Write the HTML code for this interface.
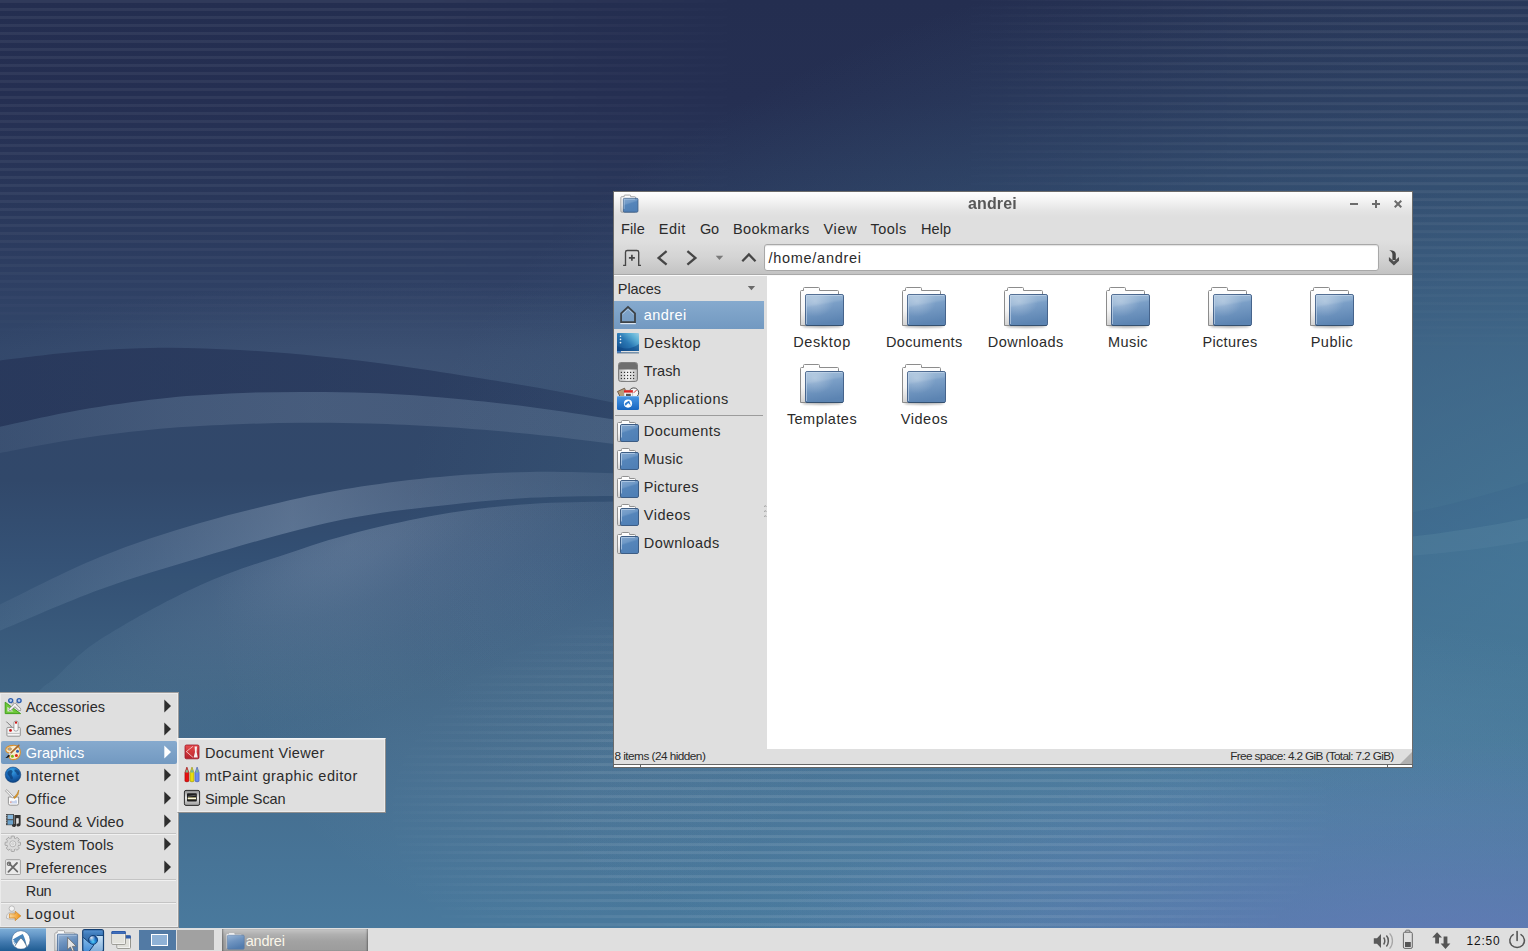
<!DOCTYPE html>
<html lang="en">
<head>
<meta charset="utf-8">
<title>andrei - Lubuntu desktop</title>
<style>
*{box-sizing:border-box;margin:0;padding:0}
html,body{width:1528px;height:951px;overflow:hidden;background:#2c3b60}
body{position:relative;font-family:"Liberation Sans","DejaVu Sans",sans-serif;color:#2e2e2e;font-size:14px;line-height:1}
.abs{position:absolute}
#wall{position:absolute;left:0;top:0;width:1528px;height:951px}
.t{position:absolute;white-space:nowrap;transform-origin:0 50%;line-height:20px;height:20px}
/* window */
#win{position:absolute;left:613px;top:191px;width:800px;height:577px;background:#dfdfdf;border:1px solid #6c6c6c}
#titlebar{position:absolute;left:0;top:0;width:798px;height:25px;background:linear-gradient(#ffffff 0px,#f4f4f4 8px,#e4e4e4 19px,#dfdfdf 25px)}
#toolbar{position:absolute;left:0;top:48px;width:798px;height:35px;background:linear-gradient(#dfdfdf,#d4d4d4 50%,#c3c3c3 100%);border-bottom:1px solid #a9a9a9}
#tbline{position:absolute;left:0;top:83px;width:798px;height:1px;background:#fbfbfb}
#addr{position:absolute;left:150px;top:52px;width:615px;height:27px;background:#fff;border:1px solid #a8a8a8;border-radius:3px;box-shadow:inset 0 1px 1px rgba(0,0,0,.12)}
#side{position:absolute;left:0;top:84px;width:150px;height:473px;background:#dfdfdf}
#pane{position:absolute;left:153px;top:84px;width:645px;height:473px;background:#fff}
#status{position:absolute;left:0;top:557px;width:798px;height:15px;background:#dfdfdf}
#wbot{position:absolute;left:-1px;top:572px;width:800px;height:4px;background:#fff;border:1px solid #666}
.sel{position:absolute;left:0;width:150px;height:28px;background:linear-gradient(#86aace,#7299c1)}
/* panel */
#panel{position:absolute;left:0;top:928px;width:1528px;height:23px;background:#dfdfdf}
/* menus */
.menu{position:absolute;background:#dfdfdf;border:1px solid #9c9c9c;box-shadow:inset 0 0 0 1px #ebebeb}
.msel{position:absolute;background:linear-gradient(#86aace,#7299c1);border-radius:2px}
.sep{position:absolute;height:1px;background:#c4c4c4;border-bottom:1px solid #f1f1f1;box-sizing:content-box}
</style>
</head>
<body>
<!--WALL_START-->
<svg id="wall" width="1528" height="951" viewBox="0 0 1528 951">
<defs>
<linearGradient id="gbase" x1="0" y1="0" x2="0" y2="951" gradientUnits="userSpaceOnUse">
<stop offset="0" stop-color="#242e50"/>
<stop offset="0.105" stop-color="#252f52"/>
<stop offset="0.21" stop-color="#29375a"/>
<stop offset="0.295" stop-color="#2e3f63"/>
<stop offset="0.368" stop-color="#32476a"/>
<stop offset="0.505" stop-color="#31486a"/>
<stop offset="0.59" stop-color="#355276"/>
<stop offset="0.72" stop-color="#3f6484"/>
<stop offset="0.84" stop-color="#456f91"/>
<stop offset="1" stop-color="#4a7b9f"/>
</linearGradient>
<radialGradient id="gright" cx="0" cy="0" r="1" gradientUnits="userSpaceOnUse" gradientTransform="translate(1650 540) scale(1250 640)">
<stop offset="0" stop-color="#4d88a8" stop-opacity="0.72"/>
<stop offset="0.5" stop-color="#4d88a8" stop-opacity="0.36"/>
<stop offset="1" stop-color="#4d88a8" stop-opacity="0"/>
</radialGradient>
<radialGradient id="gpurple" cx="0" cy="0" r="1" gradientUnits="userSpaceOnUse" gradientTransform="translate(1480 1010) scale(760 270)">
<stop offset="0" stop-color="#657ab9" stop-opacity="1"/>
<stop offset="0.3" stop-color="#627ab6" stop-opacity="0.85"/>
<stop offset="0.6" stop-color="#607ab4" stop-opacity="0.45"/>
<stop offset="1" stop-color="#5f7ab4" stop-opacity="0"/>
</radialGradient>
<radialGradient id="glow2" cx="0" cy="0" r="1" gradientUnits="userSpaceOnUse" gradientTransform="translate(1180 800) scale(640 190)">
<stop offset="0" stop-color="#7ea8d2" stop-opacity="0.14"/>
<stop offset="0.6" stop-color="#7ea8d2" stop-opacity="0.08"/>
<stop offset="1" stop-color="#7ea8d2" stop-opacity="0"/>
</radialGradient>
<radialGradient id="gglow3" cx="540" cy="600" r="330" gradientUnits="userSpaceOnUse">
<stop offset="0" stop-color="#bccde1" stop-opacity="0.08"/>
<stop offset="0.6" stop-color="#bccde1" stop-opacity="0.05"/>
<stop offset="1" stop-color="#bccde1" stop-opacity="0"/>
</radialGradient>
<radialGradient id="gglow" cx="0" cy="0" r="1" gradientUnits="userSpaceOnUse" gradientTransform="translate(350 545) rotate(-24) scale(430 170)">
<stop offset="0" stop-color="#bccde1" stop-opacity="0.225"/>
<stop offset="0.12" stop-color="#bccde1" stop-opacity="0.2"/>
<stop offset="0.35" stop-color="#bccde1" stop-opacity="0.115"/>
<stop offset="0.6" stop-color="#bccde1" stop-opacity="0.055"/>
<stop offset="0.85" stop-color="#bccde1" stop-opacity="0.012"/>
<stop offset="1" stop-color="#bccde1" stop-opacity="0"/>
</radialGradient>
<radialGradient id="gup" cx="0" cy="0" r="1" gradientUnits="userSpaceOnUse" gradientTransform="translate(400 375) scale(460 95)">
<stop offset="0" stop-color="#bccde1" stop-opacity="0.085"/>
<stop offset="0.55" stop-color="#bccde1" stop-opacity="0.045"/>
<stop offset="1" stop-color="#bccde1" stop-opacity="0"/>
</radialGradient>
<linearGradient id="gb1" x1="0" y1="0" x2="680" y2="0" gradientUnits="userSpaceOnUse">
<stop offset="0" stop-color="#bccde1" stop-opacity="0.065"/>
<stop offset="0.25" stop-color="#bccde1" stop-opacity="0.13"/>
<stop offset="0.46" stop-color="#bccde1" stop-opacity="0.155"/>
<stop offset="0.9" stop-color="#bccde1" stop-opacity="0.13"/>
<stop offset="1" stop-color="#bccde1" stop-opacity="0.1"/>
</linearGradient>
<linearGradient id="gb2" x1="0" y1="0" x2="680" y2="0" gradientUnits="userSpaceOnUse">
<stop offset="0" stop-color="#bccde1" stop-opacity="0.06"/>
<stop offset="0.22" stop-color="#bccde1" stop-opacity="0.16"/>
<stop offset="0.43" stop-color="#bccde1" stop-opacity="0.29"/>
<stop offset="0.545" stop-color="#bccde1" stop-opacity="0.24"/>
<stop offset="0.66" stop-color="#bccde1" stop-opacity="0.19"/>
<stop offset="0.78" stop-color="#bccde1" stop-opacity="0.15"/>
<stop offset="0.9" stop-color="#bccde1" stop-opacity="0.11"/>
<stop offset="1" stop-color="#bccde1" stop-opacity="0.08"/>
</linearGradient>
<linearGradient id="gd1" x1="0" y1="0" x2="680" y2="0" gradientUnits="userSpaceOnUse">
<stop offset="0" stop-color="#14183c" stop-opacity="0.3"/>
<stop offset="0.45" stop-color="#14183c" stop-opacity="0.23"/>
<stop offset="0.9" stop-color="#14183c" stop-opacity="0.15"/>
<stop offset="1" stop-color="#14183c" stop-opacity="0.1"/>
</linearGradient>
<pattern id="stripes" width="8" height="8" patternUnits="userSpaceOnUse">
<rect x="0" y="0" width="8" height="2.9" fill="#ffffff"/>
</pattern>
<pattern id="stripes2" width="8" height="8" patternUnits="userSpaceOnUse">
<rect x="0" y="6.2" width="8" height="1.8" fill="#ffffff"/><rect x="0" y="0" width="8" height="1.2" fill="#ffffff"/>
</pattern>
<pattern id="stripes3" width="8" height="8" patternUnits="userSpaceOnUse">
<rect x="0" y="3.1" width="8" height="3" fill="#ffffff"/>
</pattern>
<linearGradient id="fadeTL" x1="0" y1="0" x2="1" y2="0">
<stop offset="0" stop-color="#fff" stop-opacity="1"/>
<stop offset="0.55" stop-color="#fff" stop-opacity="1"/>
<stop offset="1" stop-color="#fff" stop-opacity="0"/>
</linearGradient>
<linearGradient id="fadeTLv" x1="0" y1="0" x2="0" y2="1">
<stop offset="0" stop-color="#fff" stop-opacity="1"/>
<stop offset="0.6" stop-color="#fff" stop-opacity="0.9"/>
<stop offset="1" stop-color="#fff" stop-opacity="0"/>
</linearGradient>
<mask id="mTL"><rect x="0" y="0" width="770" height="352" fill="url(#fadeTL)"/></mask>
<mask id="mTLv"><rect x="0" y="0" width="770" height="352" fill="url(#fadeTLv)"/></mask>
<linearGradient id="fadeTR" x1="0" y1="0" x2="1" y2="0">
<stop offset="0" stop-color="#fff" stop-opacity="0"/>
<stop offset="0.2" stop-color="#fff" stop-opacity="0.1"/>
<stop offset="0.4" stop-color="#fff" stop-opacity="0.5"/>
<stop offset="0.6" stop-color="#fff" stop-opacity="0.85"/>
<stop offset="1" stop-color="#fff" stop-opacity="1"/>
</linearGradient>
<linearGradient id="fadeTRv" x1="0" y1="0" x2="0" y2="1">
<stop offset="0" stop-color="#fff" stop-opacity="1"/>
<stop offset="0.5" stop-color="#fff" stop-opacity="0.9"/>
<stop offset="1" stop-color="#fff" stop-opacity="0"/>
</linearGradient>
<mask id="mTR"><rect x="830" y="0" width="698" height="368" fill="url(#fadeTR)"/></mask>
<mask id="mTRv"><rect x="830" y="0" width="698" height="368" fill="url(#fadeTRv)"/></mask>
<radialGradient id="fadeB" cx="0" cy="0" r="1" gradientUnits="userSpaceOnUse" gradientTransform="translate(860 812) scale(480 240)">
<stop offset="0" stop-color="#fff" stop-opacity="1"/>
<stop offset="0.6" stop-color="#fff" stop-opacity="0.8"/>
<stop offset="1" stop-color="#fff" stop-opacity="0"/>
</radialGradient>
<mask id="mB"><rect x="380" y="570" width="960" height="360" fill="url(#fadeB)"/></mask>
</defs>
<rect width="1528" height="951" fill="url(#gbase)"/>
<rect width="1528" height="951" fill="url(#gright)"/>
<rect width="1528" height="951" fill="url(#glow2)"/>
<rect width="1528" height="951" fill="url(#gpurple)"/>
<path d="M-20.0 363.5 C-13.3 362.5 -16.7 362.5 0.0 360.5 C16.7 358.5 53.3 353.6 80.0 351.5 C106.7 349.4 133.3 347.9 160.0 347.7 C186.7 347.4 213.2 348.5 240.0 350.0 C266.8 351.5 294.3 353.8 321.0 356.5 C347.7 359.2 373.2 362.3 400.0 366.0 C426.8 369.7 457.0 374.6 482.0 378.6 C507.0 382.6 528.0 386.0 550.0 390.0 C572.0 394.0 592.3 398.2 614.0 402.7 C635.7 407.2 658.0 412.2 680.0 417.0 L680 200 L-20 200 Z" fill="url(#gup)"/>
<path d="M-20.0 363.5 C-13.3 362.5 -16.7 362.5 0.0 360.5 C16.7 358.5 53.3 353.6 80.0 351.5 C106.7 349.4 133.3 347.9 160.0 347.7 C186.7 347.4 213.2 348.5 240.0 350.0 C266.8 351.5 294.3 353.8 321.0 356.5 C347.7 359.2 373.2 362.3 400.0 366.0 C426.8 369.7 457.0 374.6 482.0 378.6 C507.0 382.6 528.0 386.0 550.0 390.0 C572.0 394.0 592.3 398.2 614.0 402.7 C635.7 407.2 658.0 412.2 680.0 417.0 L680.0 431.0 C658.0 427.2 639.0 423.6 614.0 419.6 C589.0 415.6 558.7 410.7 530.0 407.0 C501.3 403.3 468.7 399.8 442.0 397.5 C415.3 395.2 393.5 393.9 370.0 393.0 C346.5 392.1 324.3 391.8 301.0 391.9 C277.7 392.0 253.5 392.4 230.0 393.5 C206.5 394.6 185.0 395.9 160.0 398.7 C135.0 401.4 106.7 405.3 80.0 410.0 C53.3 414.7 16.7 423.2 0.0 426.8 C-16.7 430.4 -13.3 429.9 -20.0 431.5 Z" fill="url(#gd1)"/>
<path d="M-20.0 431.5 C-13.3 429.9 -16.7 430.4 0.0 426.8 C16.7 423.2 53.3 414.7 80.0 410.0 C106.7 405.3 135.0 401.4 160.0 398.7 C185.0 395.9 206.5 394.6 230.0 393.5 C253.5 392.4 277.7 392.0 301.0 391.9 C324.3 391.8 346.5 392.1 370.0 393.0 C393.5 393.9 415.3 395.2 442.0 397.5 C468.7 399.8 501.3 403.3 530.0 407.0 C558.7 410.7 589.0 415.6 614.0 419.6 C639.0 423.6 658.0 427.2 680.0 431.0 L680.0 453.0 C658.0 450.0 639.0 447.2 614.0 444.0 C589.0 440.8 558.7 436.9 530.0 434.0 C501.3 431.1 468.7 428.6 442.0 426.8 C415.3 425.1 393.5 424.2 370.0 423.5 C346.5 422.8 324.3 422.6 301.0 422.8 C277.7 423.0 253.5 423.5 230.0 424.5 C206.5 425.5 185.0 426.5 160.0 428.8 C135.0 431.1 106.7 434.5 80.0 438.5 C53.3 442.5 16.7 449.9 0.0 453.0 C-16.7 456.1 -13.3 455.7 -20.0 457.0 Z" fill="url(#gb1)"/>
<path d="M-20.0 615.0 C-13.3 611.5 -20.0 614.3 0.0 604.6 C20.0 594.9 66.7 570.6 100.0 557.0 C133.3 543.4 166.7 532.8 200.0 523.0 C233.3 513.2 271.7 504.3 300.0 498.0 C328.3 491.7 345.0 488.9 370.0 485.2 C395.0 481.5 423.3 478.1 450.0 475.9 C476.7 473.7 502.8 472.3 530.0 471.9 C557.2 471.4 588.0 472.5 613.0 473.2 C638.0 473.9 657.7 475.1 680.0 476.0 L680.0 496.5 C657.7 496.3 638.0 495.7 613.0 495.9 C588.0 496.1 557.2 496.3 530.0 497.8 C502.8 499.3 476.7 501.9 450.0 504.7 C423.3 507.5 395.0 510.6 370.0 514.7 C345.0 518.8 328.3 522.2 300.0 529.4 C271.7 536.6 233.3 547.8 200.0 557.8 C166.7 567.8 133.3 577.2 100.0 589.4 C66.7 601.5 20.0 622.3 0.0 630.7 C-20.0 639.1 -13.3 636.9 -20.0 640.0 Z" fill="url(#gb2)"/>
<path d="M-20.0 640.0 C-13.3 636.9 -20.0 639.1 0.0 630.7 C20.0 622.3 66.7 601.5 100.0 589.4 C133.3 577.2 166.7 567.8 200.0 557.8 C233.3 547.8 271.7 536.6 300.0 529.4 C328.3 522.2 345.0 518.8 370.0 514.7 C395.0 510.6 423.3 507.5 450.0 504.7 C476.7 501.9 502.8 499.3 530.0 497.8 C557.2 496.3 588.0 496.1 613.0 495.9 C638.0 495.7 657.7 496.3 680.0 496.5 L680.0 501.0 C657.7 501.2 638.0 501.0 613.0 501.5 C588.0 502.0 557.2 502.0 530.0 503.9 C502.8 505.8 476.7 508.5 450.0 512.7 C423.3 516.9 395.0 523.0 370.0 529.1 C345.0 535.2 328.3 540.0 300.0 549.4 C271.7 558.8 233.3 570.2 200.0 585.2 C166.7 600.2 124.2 624.0 100.0 639.5 C75.8 655.0 64.7 669.9 55.0 678.0 C45.3 686.1 49.5 681.3 42.0 688.0 C34.5 694.7 20.3 706.0 10.0 718.0 C-0.3 730.0 -10.0 746.0 -20.0 760.0 Z" fill="#1c2c50" opacity="0.06"/>
<path d="M-20.0 760.0 C-10.0 746.0 -0.3 730.0 10.0 718.0 C20.3 706.0 34.5 694.7 42.0 688.0 C49.5 681.3 45.3 686.1 55.0 678.0 C64.7 669.9 75.8 655.0 100.0 639.5 C124.2 624.0 166.7 600.2 200.0 585.2 C233.3 570.2 271.7 558.8 300.0 549.4 C328.3 540.0 345.0 535.2 370.0 529.1 C395.0 523.0 423.3 516.9 450.0 512.7 C476.7 508.5 502.8 505.8 530.0 503.9 C557.2 502.0 588.0 502.0 613.0 501.5 C638.0 501.0 657.7 501.2 680.0 501.0 L1000 500 L1000 1000 L-20 1000 Z" fill="url(#gglow)"/>
<path d="M-20.0 760.0 C-10.0 746.0 -0.3 730.0 10.0 718.0 C20.3 706.0 34.5 694.7 42.0 688.0 C49.5 681.3 45.3 686.1 55.0 678.0 C64.7 669.9 75.8 655.0 100.0 639.5 C124.2 624.0 166.7 600.2 200.0 585.2 C233.3 570.2 271.7 558.8 300.0 549.4 C328.3 540.0 345.0 535.2 370.0 529.1 C395.0 523.0 423.3 516.9 450.0 512.7 C476.7 508.5 502.8 505.8 530.0 503.9 C557.2 502.0 588.0 502.0 613.0 501.5 C638.0 501.0 657.7 501.2 680.0 501.0 L1000 500 L1000 1000 L-20 1000 Z" fill="url(#gglow3)"/>
<g mask="url(#mTLv)"><rect x="0" y="0" width="770" height="352" fill="url(#stripes)" opacity="0.06" mask="url(#mTL)"/></g>
<g mask="url(#mTRv)"><rect x="830" y="0" width="698" height="368" fill="url(#stripes2)" opacity="0.07" mask="url(#mTR)"/></g>
<rect x="380" y="572" width="960" height="356" fill="url(#stripes3)" opacity="0.1" mask="url(#mB)"/>
<path d="M1400 515 C1450 505 1490 494 1528 482 L1528 518 C1490 526 1450 532 1400 538 Z" fill="#2f5580" opacity="0.13"/>
<path d="M1400 538 C1450 532 1490 526 1528 518 L1528 541 C1490 548 1450 553 1400 557 Z" fill="#9fc0d8" opacity="0.07"/>
</svg>
<!--WALL_END-->
<!--WINDOW_START-->
<div id="win">
<div id="titlebar"></div>
<div id="toolbar"></div><div id="tbline"></div>
<div id="addr"></div>
<div id="side"></div>
<div id="pane"></div>
<div id="status"></div>
<div id="wbot"><i style="position:absolute;left:26px;top:0;width:1px;height:2px;background:#666"></i><i style="position:absolute;left:773px;top:0;width:1px;height:2px;background:#666"></i></div>
<div class="t" style="will-change:transform;left:353.60px;top:1.50px;font-size:16.00px;color:#585858;letter-spacing:0.131px;font-weight:bold;">andrei</div>
<div class="t" style="left:6.90px;top:27.00px;font-size:14.50px;color:#2b2b2b;letter-spacing:0.184px;">File</div>
<div class="t" style="left:44.70px;top:27.00px;font-size:14.50px;color:#2b2b2b;letter-spacing:0.529px;">Edit</div>
<div class="t" style="left:85.90px;top:27.00px;font-size:14.50px;color:#2b2b2b;letter-spacing:-0.221px;">Go</div>
<div class="t" style="left:118.90px;top:27.00px;font-size:14.50px;color:#2b2b2b;letter-spacing:0.475px;">Bookmarks</div>
<div class="t" style="left:209.40px;top:27.00px;font-size:14.50px;color:#2b2b2b;letter-spacing:0.683px;">View</div>
<div class="t" style="left:256.60px;top:27.00px;font-size:14.50px;color:#2b2b2b;letter-spacing:0.430px;">Tools</div>
<div class="t" style="left:306.90px;top:27.00px;font-size:14.50px;color:#2b2b2b;letter-spacing:0.120px;">Help</div>
<div class="t" style="left:154.50px;top:56.00px;font-size:14.50px;color:#2b2b2b;letter-spacing:0.714px;">/home/andrei</div>
<div class="t" style="left:3.80px;top:87.00px;font-size:14.50px;color:#2b2b2b;letter-spacing:-0.087px;">Places</div>
<div class="sel" style="top:109px"></div>
<div class="t" style="left:29.80px;top:113.00px;font-size:14.50px;color:#ffffff;letter-spacing:0.399px;">andrei</div>
<div class="t" style="left:29.80px;top:141.00px;font-size:14.50px;color:#2b2b2b;letter-spacing:0.615px;">Desktop</div>
<div class="t" style="left:29.80px;top:169.00px;font-size:14.50px;color:#2b2b2b;letter-spacing:0.055px;">Trash</div>
<div class="t" style="left:29.80px;top:197.00px;font-size:14.50px;color:#2b2b2b;letter-spacing:0.576px;">Applications</div>
<div class="t" style="left:29.80px;top:229.00px;font-size:14.50px;color:#2b2b2b;letter-spacing:0.407px;">Documents</div>
<div class="t" style="left:29.80px;top:257.00px;font-size:14.50px;color:#2b2b2b;letter-spacing:0.347px;">Music</div>
<div class="t" style="left:29.80px;top:285.00px;font-size:14.50px;color:#2b2b2b;letter-spacing:0.315px;">Pictures</div>
<div class="t" style="left:29.80px;top:313.00px;font-size:14.50px;color:#2b2b2b;letter-spacing:0.488px;">Videos</div>
<div class="t" style="left:29.80px;top:341.00px;font-size:14.50px;color:#2b2b2b;letter-spacing:0.463px;">Downloads</div>
<div class="abs" style="left:1px;top:223px;width:148px;height:1px;background:#9c9c9c"></div>
<div class="t" style="left:179.15px;top:140.00px;font-size:14.50px;color:#2b2b2b;letter-spacing:0.644px;">Desktop</div>
<div class="t" style="left:272.00px;top:140.00px;font-size:14.50px;color:#2b2b2b;letter-spacing:0.363px;">Documents</div>
<div class="t" style="left:373.80px;top:140.00px;font-size:14.50px;color:#2b2b2b;letter-spacing:0.474px;">Downloads</div>
<div class="t" style="left:494.10px;top:140.00px;font-size:14.50px;color:#2b2b2b;letter-spacing:0.387px;">Music</div>
<div class="t" style="left:588.40px;top:140.00px;font-size:14.50px;color:#2b2b2b;letter-spacing:0.353px;">Pictures</div>
<div class="t" style="left:696.65px;top:140.00px;font-size:14.50px;color:#2b2b2b;letter-spacing:0.534px;">Public</div>
<div class="t" style="left:172.90px;top:217.00px;font-size:14.50px;color:#2b2b2b;letter-spacing:0.457px;">Templates</div>
<div class="t" style="left:286.80px;top:217.00px;font-size:14.50px;color:#2b2b2b;letter-spacing:0.521px;">Videos</div>
<div class="t" style="left:0.50px;top:554.00px;font-size:11.80px;color:#2b2b2b;letter-spacing:-0.537px;">8 items (24 hidden)</div>
<div class="t" style="left:616.20px;top:554.00px;font-size:11.80px;color:#2b2b2b;letter-spacing:-0.650px;">Free space: 4.2 GiB (Total: 7.2 GiB)</div>
<svg class="abs" style="left:-1px;top:-1px" width="800" height="577" viewBox="613 191 800 577">
<defs>
<linearGradient id="fBack" x1="0" y1="0" x2="0" y2="1"><stop offset="0" stop-color="#ffffff"/><stop offset="0.6" stop-color="#f4f4f4"/><stop offset="1" stop-color="#d2d2d2"/></linearGradient>
<linearGradient id="fFront" x1="0" y1="0" x2="0.22" y2="1"><stop offset="0" stop-color="#a6c1dc"/><stop offset="0.34" stop-color="#8eaed0"/><stop offset="0.42" stop-color="#7b9fc7"/><stop offset="1" stop-color="#5c84b2"/></linearGradient>
<linearGradient id="fFrontS" x1="0" y1="0" x2="0.35" y2="1"><stop offset="0" stop-color="#86a9d0"/><stop offset="0.4" stop-color="#6e98c6"/><stop offset="0.5" stop-color="#5585ba"/><stop offset="1" stop-color="#5080b6"/></linearGradient>
<radialGradient id="fShine" cx="0.25" cy="0.22" r="0.5"><stop offset="0" stop-color="#fff" stop-opacity="0.28"/><stop offset="1" stop-color="#fff" stop-opacity="0"/></radialGradient>
<filter id="blur1" x="-20%" y="-100%" width="140%" height="300%"><feGaussianBlur stdDeviation="0.9"/></filter>
<symbol id="bigfolder" viewBox="0 0 48 44" overflow="visible">
<ellipse cx="24" cy="41.2" rx="20" ry="1.6" fill="#000" opacity="0.32" filter="url(#blur1)"/>
<path d="M2.5 40.5 L2.5 6.5 Q2.5 5.5 3.5 5.5 L5.5 5.5 L5.5 3.5 Q5.5 2.5 6.5 2.5 L20.5 2.5 Q21.5 2.5 21.5 3.5 L21.5 5.5 L39.5 5.5 Q40.5 5.5 40.5 6.5 L40.5 40.5 Z" fill="url(#fBack)" stroke="#8c8c8c" stroke-width="1"/>
<rect x="7.5" y="9.5" width="38" height="31" rx="1.6" fill="url(#fFront)" stroke="#46648c" stroke-width="1"/>
<rect x="7.5" y="9.5" width="38" height="31" rx="1.6" fill="url(#fShine)"/>
<path d="M8.5 39 L8.5 10.5 L44.4 10.5" fill="none" stroke="#c6d8ea" stroke-width="0.8" opacity="0.8"/>
<path d="M8.4 40.5 L44.6 40.5" stroke="#34506f" stroke-width="1"/>
</symbol>
<symbol id="smfolder" viewBox="0 0 24 24" overflow="visible">
<path d="M1.6 20.6 L1.6 3.6 Q1.6 2.6 2.6 2.6 L5.6 2.6 L5.6 1.6 Q5.6 0.6 6.6 0.6 L12.6 0.6 Q13.6 0.6 13.6 1.6 L13.6 2.6 L18.6 2.6 Q19.6 2.6 19.6 3.6 L19.6 20.6 Q19.6 21.6 18.6 21.6 L2.6 21.6 Q1.6 21.6 1.6 20.6 Z" fill="url(#fBack)" stroke="#909090" stroke-width="1"/>
<rect x="4.6" y="4.6" width="18" height="17" rx="1.4" fill="url(#fFrontS)" stroke="#3c5c84" stroke-width="1"/>
<path d="M5.6 17.6 L5.6 5.6 L19 5.6" fill="none" stroke="#c0d5ec" stroke-width="0.8" opacity="0.85"/>
</symbol>
</defs>
<!-- title icon -->
<use href="#smfolder" x="619.6" y="194.6" width="19.5" height="19.5"/>
<!-- window buttons -->
<g fill="#6c6c6c">
<rect x="1350" y="203" width="8" height="2"/>
<rect x="1372" y="203" width="8" height="2"/><rect x="1375" y="200" width="2" height="8"/>
<path d="M1394 201.4 L1395.4 200 L1398 202.6 L1400.6 200 L1402 201.4 L1399.4 204 L1402 206.6 L1400.6 208 L1398 205.4 L1395.4 208 L1394 206.6 L1396.6 204 Z"/>
</g>
<!-- toolbar icons -->
<g fill="none" stroke="#464646">
<path d="M623.1 265.3 L625.5 265.3 L625.5 252.3 Q625.5 250.5 627.3 250.5 L636.9 250.5 Q638.7 250.5 638.7 252.3 L638.7 265.3 L641 265.3" stroke-width="1.35"/>
<path d="M628.9 257.8 L634.9 257.8 M631.9 254.8 L631.9 260.8" stroke-width="1.7"/>
<path d="M666.6 251.2 L658.6 257.9 L666.6 264.6" stroke-width="2.3"/>
<path d="M687.4 251.2 L695.4 257.9 L687.4 264.6" stroke-width="2.3"/>
<path d="M742.3 261.2 L748.9 254.4 L755.5 261.2" stroke-width="2.3"/>
</g>
<path d="M715.7 255.8 L723.2 255.8 L719.45 260 Z" fill="#7a7a7a"/>
<path d="M747.8 286 L755.1 286 L751.45 290.3 Z" fill="#6a6a6a"/>
<!-- jump icon -->
<path d="M1388.9 257 L1393.9 261.4 L1399 257 L1399 260.7 L1393.9 265.4 L1388.9 260.7 Z" fill="#505050"/>
<path d="M1389.2 250.2 C1393.5 250.2 1395.8 251.4 1395.8 254.2 L1395.8 260 L1392.4 260 L1392.4 254.4 C1392.4 252.4 1391.2 251.2 1389.2 250.2 Z" fill="#454545"/>
<!-- pane handle -->
<g fill="none" stroke="#8a8a8a" stroke-width="0.8"><path d="M764.3 506.8 L765.3 505.6 L766.3 506.8 M764.3 511.8 L765.3 510.6 L766.3 511.8 M764.3 516.8 L765.3 515.6 L766.3 516.8"/></g>
<!-- resize grip -->
<path d="M1412 752 L1412 764 L1400 764 Z" fill="#b0b0b0"/>
<!-- big folders -->
<use href="#bigfolder" x="798" y="285" width="48" height="44"/>
<use href="#bigfolder" x="900" y="285" width="48" height="44"/>
<use href="#bigfolder" x="1002" y="285" width="48" height="44"/>
<use href="#bigfolder" x="1104" y="285" width="48" height="44"/>
<use href="#bigfolder" x="1206" y="285" width="48" height="44"/>
<use href="#bigfolder" x="1308" y="285" width="48" height="44"/>
<use href="#bigfolder" x="798" y="362" width="48" height="44"/>
<use href="#bigfolder" x="900" y="362" width="48" height="44"/>
<!-- sidebar small folders -->
<use href="#smfolder" x="615.9" y="419.9" width="24" height="24"/>
<use href="#smfolder" x="615.9" y="447.9" width="24" height="24"/>
<use href="#smfolder" x="615.9" y="475.9" width="24" height="24"/>
<use href="#smfolder" x="615.9" y="503.9" width="24" height="24"/>
<use href="#smfolder" x="615.9" y="531.9" width="24" height="24"/>
<!-- home -->
<path d="M620.3 323.6 L635.8 323.6" stroke="#dbe7f3" stroke-width="1.2"/>
<path d="M621.1 322.1 L621.1 313.4 L628 306.9 L635 313.4 L635 322.1 Z" fill="none" stroke="#3e4347" stroke-width="1.8" stroke-linejoin="miter"/>
<path d="M622.6 314.2 L628 309.2 L633.5 314.2" fill="none" stroke="#c9dcee" stroke-width="0.7" opacity="0.8"/>
<!-- desktop icon -->
<defs>
<linearGradient id="dsk" x1="0" y1="1" x2="1" y2="0"><stop offset="0" stop-color="#0d4585"/><stop offset="0.5" stop-color="#2a78b4"/><stop offset="0.8" stop-color="#62b4d8"/><stop offset="1" stop-color="#9ccbe2"/></linearGradient>
<linearGradient id="trsh" x1="0" y1="0" x2="1" y2="0"><stop offset="0" stop-color="#bdbdbd"/><stop offset="0.5" stop-color="#f6f6f6"/><stop offset="1" stop-color="#bdbdbd"/></linearGradient>
<linearGradient id="appb" x1="0" y1="0" x2="0" y2="1"><stop offset="0" stop-color="#4a98e6"/><stop offset="1" stop-color="#1766c0"/></linearGradient>
</defs>
<rect x="617" y="333" width="22" height="20" rx="0.8" fill="url(#dsk)"/>
<path d="M617 346 C624 350 632 349 639 344 L639 351 L617 351 Z" fill="#0c3f7c" opacity="0.45"/>
<rect x="617" y="351" width="22" height="1.6" fill="#e2e2e2"/><rect x="617" y="351" width="4" height="1.6" fill="#3a78c0"/>
<rect x="617" y="352.6" width="22" height="0.8" fill="#27456a" opacity="0.7"/>
<g fill="#fff" opacity="0.9"><circle cx="620.5" cy="336.3" r="0.8"/><circle cx="620.5" cy="339.4" r="0.8"/><circle cx="620.5" cy="342.6" r="0.9"/></g>
<!-- trash -->
<rect x="618.6" y="362.6" width="18.8" height="18.8" rx="2" fill="url(#trsh)" stroke="#757575" stroke-width="1"/>
<path d="M619 369.5 L619 364.6 Q619 363 620.6 363 L635.4 363 Q637 363 637 364.6 L637 369.5 Z" fill="#6e6e6e"/>
<g fill="#333">
<rect x="620.8" y="371.8" width="1.2" height="1.2"/><rect x="623.9" y="371.8" width="1.2" height="1.2"/><rect x="627" y="371.8" width="1.2" height="1.2"/><rect x="630" y="371.8" width="1.2" height="1.2"/><rect x="633" y="371.8" width="1.2" height="1.2"/>
<rect x="620.8" y="374.9" width="1.2" height="1.2"/><rect x="623.9" y="374.9" width="1.2" height="1.2"/><rect x="627" y="374.9" width="1.2" height="1.2"/><rect x="630" y="374.9" width="1.2" height="1.2"/><rect x="633" y="374.9" width="1.2" height="1.2"/>
<rect x="620.8" y="377.9" width="1.2" height="1.2"/><rect x="623.9" y="377.9" width="1.2" height="1.2"/><rect x="627" y="377.9" width="1.2" height="1.2"/><rect x="630" y="377.9" width="1.2" height="1.2"/><rect x="633" y="377.9" width="1.2" height="1.2"/>
</g>
<!-- applications -->
<path d="M617.5 391.5 L624.5 388.2 L628 395.5 L621 398.5 Z" fill="#b89c78" stroke="#4a3a2a" stroke-width="0.7"/>
<circle cx="633.8" cy="392.8" r="4.9" fill="#f6f6f6" stroke="#3a3a3a" stroke-width="0.9"/>
<path d="M633.8 392.8 L636.6 390" stroke="#d02020" stroke-width="0.9"/>
<rect x="624" y="390.2" width="8.8" height="7.5" fill="#f4f4f4" stroke="#9a9a9a" stroke-width="0.5"/>
<rect x="624" y="390.2" width="8.8" height="2.4" fill="#dc2424"/>
<rect x="626" y="393.8" width="4.8" height="3" fill="#555"/>
<rect x="617" y="396" width="22" height="14" rx="1.6" fill="url(#appb)"/>
<rect x="617" y="396" width="22" height="1" fill="#7db8f0" opacity="0.8"/>
<circle cx="628" cy="403.6" r="4.1" fill="#fff"/>
<path d="M624.6 404 C626 402.2 627.6 401.2 629.2 400.7 C629.8 402.4 630.4 404.2 630.8 406 C630 404.6 629.2 403.6 628.2 403 C627.4 403.8 626.6 404.8 625.8 405.8 Z" fill="#2a7ad0"/>
</svg>

</div>
<!--WINDOW_END-->
<!--MENU_START-->
<div class="menu" id="mainmenu" style="left:-1px;top:692px;width:180px;height:236px"></div>
<div class="msel" style="left:1px;top:741px;width:176px;height:23px"></div>
<div class="t" style="left:25.80px;top:697.00px;font-size:14.50px;color:#2b2b2b;letter-spacing:0.112px;">Accessories</div>
<svg class="abs" style="left:164px;top:699.1px" width="8" height="14" viewBox="0 0 8 14"><path d="M0.3 0.6 L7 7 L0.3 13.4 Z" fill="#2e2e2e"/></svg>
<div class="t" style="left:25.80px;top:720.00px;font-size:14.50px;color:#2b2b2b;letter-spacing:-0.287px;">Games</div>
<svg class="abs" style="left:164px;top:722.1px" width="8" height="14" viewBox="0 0 8 14"><path d="M0.3 0.6 L7 7 L0.3 13.4 Z" fill="#2e2e2e"/></svg>
<div class="t" style="left:25.80px;top:743.00px;font-size:14.50px;color:#ffffff;letter-spacing:0.047px;">Graphics</div>
<svg class="abs" style="left:164px;top:745.0px" width="8" height="14" viewBox="0 0 8 14"><path d="M0.3 0.6 L7 7 L0.3 13.4 Z" fill="#ffffff"/></svg>
<div class="t" style="left:25.80px;top:766.00px;font-size:14.50px;color:#2b2b2b;letter-spacing:0.579px;">Internet</div>
<svg class="abs" style="left:164px;top:768.1px" width="8" height="14" viewBox="0 0 8 14"><path d="M0.3 0.6 L7 7 L0.3 13.4 Z" fill="#2e2e2e"/></svg>
<div class="t" style="left:25.80px;top:789.00px;font-size:14.50px;color:#2b2b2b;letter-spacing:0.548px;">Office</div>
<svg class="abs" style="left:164px;top:791.1px" width="8" height="14" viewBox="0 0 8 14"><path d="M0.3 0.6 L7 7 L0.3 13.4 Z" fill="#2e2e2e"/></svg>
<div class="t" style="left:25.80px;top:812.00px;font-size:14.50px;color:#2b2b2b;letter-spacing:0.132px;">Sound &amp; Video</div>
<svg class="abs" style="left:164px;top:814.0px" width="8" height="14" viewBox="0 0 8 14"><path d="M0.3 0.6 L7 7 L0.3 13.4 Z" fill="#2e2e2e"/></svg>
<div class="t" style="left:25.80px;top:835.00px;font-size:14.50px;color:#2b2b2b;letter-spacing:0.162px;">System Tools</div>
<svg class="abs" style="left:164px;top:837.0px" width="8" height="14" viewBox="0 0 8 14"><path d="M0.3 0.6 L7 7 L0.3 13.4 Z" fill="#2e2e2e"/></svg>
<div class="t" style="left:25.80px;top:858.00px;font-size:14.50px;color:#2b2b2b;letter-spacing:0.266px;">Preferences</div>
<svg class="abs" style="left:164px;top:860.0px" width="8" height="14" viewBox="0 0 8 14"><path d="M0.3 0.6 L7 7 L0.3 13.4 Z" fill="#2e2e2e"/></svg>
<div class="t" style="left:25.80px;top:881.00px;font-size:14.50px;color:#2b2b2b;letter-spacing:-0.367px;">Run</div>
<div class="t" style="left:25.80px;top:904.00px;font-size:14.50px;color:#2b2b2b;letter-spacing:0.842px;">Logout</div>
<div class="sep" style="left:1px;top:833px;width:175px"></div>
<div class="sep" style="left:1px;top:879px;width:175px"></div>
<div class="sep" style="left:1px;top:902px;width:175px"></div>
<div class="menu" id="submenu" style="left:177px;top:738px;width:209px;height:75px;border-color:#f4f4f4 #8f8f8f #8f8f8f #f4f4f4"></div>
<div class="t" style="left:204.90px;top:743.00px;font-size:14.50px;color:#2b2b2b;letter-spacing:0.375px;">Document Viewer</div>
<div class="t" style="left:204.90px;top:766.00px;font-size:14.50px;color:#2b2b2b;letter-spacing:0.539px;">mtPaint graphic editor</div>
<div class="t" style="left:204.90px;top:789.00px;font-size:14.50px;color:#2b2b2b;letter-spacing:-0.064px;">Simple Scan</div>
<svg class="abs" style="left:0;top:690px" width="400" height="240" viewBox="0 690 400 240">
<defs>
<radialGradient id="globe" cx="0.45" cy="0.25" r="0.8"><stop offset="0" stop-color="#3aa4e6"/><stop offset="0.5" stop-color="#1c6cbc"/><stop offset="1" stop-color="#0a3c7a"/></radialGradient>
<linearGradient id="evg" x1="0" y1="0" x2="0" y2="1"><stop offset="0" stop-color="#e85050"/><stop offset="1" stop-color="#b4202c"/></linearGradient>
<linearGradient id="scn" x1="0" y1="0" x2="0" y2="1"><stop offset="0" stop-color="#8a8a8a"/><stop offset="0.5" stop-color="#e8e8e8"/><stop offset="1" stop-color="#9a9a9a"/></linearGradient>
<linearGradient id="arr" x1="0" y1="0" x2="1" y2="0"><stop offset="0" stop-color="#f8d8a0"/><stop offset="1" stop-color="#f09010"/></linearGradient>
</defs>
<!-- Accessories -->
<path d="M5.2 702.2 L5.2 713.6 L20.6 713.6 Z" fill="#6cc838" stroke="#3a9a14" stroke-width="0.9"/>
<path d="M7.4 706.8 L7.4 711.6 L13.6 711.6 Z" fill="#dfe8d8"/>
<path d="M15.6 705.4 L11.6 702.2" stroke="#8a8a8a" stroke-width="2.2" stroke-linecap="round"/><path d="M14.2 705.4 L18.2 702.2" stroke="#8a8a8a" stroke-width="2.2" stroke-linecap="round"/><path d="M15.6 705.4 L11.6 702.2" stroke="#ececec" stroke-width="1.1" stroke-linecap="round"/><path d="M14.2 705.4 L18.2 702.2" stroke="#ececec" stroke-width="1.1" stroke-linecap="round"/>
<path d="M14.6 704.6 L19.6 709.4" stroke="#8a8a8a" stroke-width="3.2" stroke-linecap="round"/>
<path d="M15.2 704.6 L10.2 709.4" stroke="#8a8a8a" stroke-width="3.2" stroke-linecap="round"/>
<path d="M14.6 704.6 L19.6 709.4" stroke="#f4f4f4" stroke-width="2" stroke-linecap="round"/>
<path d="M15.2 704.6 L10.2 709.4" stroke="#f4f4f4" stroke-width="2" stroke-linecap="round"/>
<circle cx="10.7" cy="700.6" r="2" fill="#b9cdea" stroke="#2f5fae" stroke-width="1.4"/>
<circle cx="19.1" cy="700.6" r="2" fill="#b9cdea" stroke="#2f5fae" stroke-width="1.4"/>
<!-- Games -->
<path d="M6.4 721.6 C8 724 10.6 724.4 11.6 727.2" fill="none" stroke="#555" stroke-width="0.7"/>
<rect x="6.9" y="727.4" width="13.4" height="8.8" rx="1" fill="#f4f4f4" stroke="#8a8a8a" stroke-width="0.9"/>
<path d="M7.4 733.4 L19.8 733.4" stroke="#b0b0b0" stroke-width="0.8"/>
<rect x="13.9" y="721.2" width="4.2" height="9.8" rx="1.6" fill="#fafafa" stroke="#8a8a8a" stroke-width="0.8"/>
<rect x="15" y="721.6" width="2" height="2" fill="#d01818"/>
<circle cx="10.5" cy="730.4" r="1.4" fill="#c81414"/>
<!-- Graphics -->
<path d="M12.6 745.4 C17.4 744.6 20.6 748 20.4 752.4 C20.2 757 16.8 759.8 12.8 759.6 C9.6 759.4 8.6 757.4 9.6 755.8 C10.6 754.2 9.6 753 7.8 752.6 C5.2 752 5 748.4 7.6 746.8 C9 745.9 10.8 745.6 12.6 745.4 Z" fill="#f7ebcf" stroke="#d98f2c" stroke-width="1.1"/>
<ellipse cx="9.6" cy="749" rx="1.9" ry="1.3" fill="#86a9cb" stroke="#d98f2c" stroke-width="0.8"/>
<circle cx="17.5" cy="751.3" r="1.5" fill="#2c5fb4"/><circle cx="16.4" cy="755.6" r="1.5" fill="#dc2a1a"/><circle cx="12.4" cy="756.3" r="1.5" fill="#7ab818"/>
<path d="M18.8 745.4 L10.2 753.6" stroke="#a8682c" stroke-width="1.6" stroke-linecap="round"/>
<path d="M10.6 753.2 L8.8 755" stroke="#d8d8d8" stroke-width="1.8"/>
<path d="M8.8 754.6 C7.6 755.4 7.4 756.8 5.4 757.8 C7.4 758.4 9.4 757.6 9.8 755.6 Z" fill="#1c1c1c"/>
<!-- Internet -->
<circle cx="13" cy="774.8" r="7.8" fill="url(#globe)" stroke="#0c3c74" stroke-width="0.5"/>
<path d="M8.6 771 C10 769.6 12 769.8 12.6 771 C13 772.4 11.4 773 11.6 774.4 C11.8 776 13.4 776.6 12.8 778.4 C12.2 780 10.6 779.4 10 777.8 C9.4 776 7.6 775.4 7.4 773.6 C7.3 772.4 7.8 771.6 8.6 771 Z" fill="#0e3f78" opacity="0.75"/>
<path d="M15 769.4 C16.8 769.2 18.6 770.8 19.4 772.8 C19.8 774.4 18.6 775.6 17.4 774.8 C16.2 774 16.6 772.6 15.4 772 C14.4 771.4 14 769.8 15 769.4 Z" fill="#0e3f78" opacity="0.7"/>
<!-- Office -->
<path d="M8.4 797 L8.4 803.4 Q8.4 805.2 10.2 805.2 L16.8 805.2 Q18.6 805.2 18.6 803.4 L18.6 797 Z" fill="#fafafa" stroke="#8c8c8c" stroke-width="0.9"/>
<path d="M10 801.4 C11.6 799.6 13.4 802.4 15.2 800.4 C16.2 799.6 17 800.6 17 801.8 L17 803.4 L10 803.4 Z" fill="#b8c8e8" opacity="0.8"/>
<circle cx="10.8" cy="802.2" r="0.9" fill="#f0a088" opacity="0.8"/>
<path d="M5.4 790.8 L6.8 789.6 L13.8 796.8 L12.6 798.2 Z" fill="#f2f2f2" stroke="#8a8a8a" stroke-width="0.7"/>
<path d="M18.8 790 L17.2 793.4 L13.6 798 L15 798.4 L18.2 794.4 Z" fill="#e09a2a" stroke="#b07414" stroke-width="0.5"/>
<!-- Sound & Video -->
<rect x="6" y="814" width="8" height="11.2" fill="#4a4a4a"/>
<rect x="7.6" y="814.8" width="5.4" height="4.4" fill="#86b6da"/><rect x="7.6" y="820.2" width="5.4" height="4.4" fill="#6aa2cc"/>
<g fill="#ddd"><rect x="6.4" y="815" width="0.7" height="0.9"/><rect x="6.4" y="817.4" width="0.7" height="0.9"/><rect x="6.4" y="819.8" width="0.7" height="0.9"/><rect x="6.4" y="822.2" width="0.7" height="0.9"/></g>
<path d="M14.4 815 L20.6 815 L20.6 824.6 C20.6 826.2 18.4 827.2 17 826.2 C15.8 825.2 16.6 823.4 18.6 823.6 L18.6 818.2 L16.2 818.2 L16.2 825 C16.2 826.8 13.8 827.6 12.4 826.6 C11.2 825.6 12.2 823.8 14.4 824 Z" fill="#333"/>
<rect x="16.6" y="818.6" width="1.8" height="4.4" fill="#e6e6e6"/>
<!-- System Tools gear -->
<g transform="translate(12.8 843.8)">
<g fill="#d6d6d6" stroke="#9a9a9a" stroke-width="0.8">
<rect x="-1.7" y="-7.7" width="3.4" height="15.4" rx="0.7"/>
<rect x="-1.7" y="-7.7" width="3.4" height="15.4" rx="0.7" transform="rotate(45)"/>
<rect x="-1.7" y="-7.7" width="3.4" height="15.4" rx="0.7" transform="rotate(90)"/>
<rect x="-1.7" y="-7.7" width="3.4" height="15.4" rx="0.7" transform="rotate(135)"/>
</g>
<circle r="5.5" fill="#dadada"/>
<circle r="3" fill="#ececec" stroke="#a8a8a8" stroke-width="0.8"/>
<circle r="1.2" fill="#dfdfdf" stroke="#b8b8b8" stroke-width="0.5"/>
</g>
<!-- Preferences -->
<rect x="5.6" y="859.7" width="14.8" height="14.8" rx="0.8" fill="#ebebeb" stroke="#9a9a9a" stroke-width="0.9"/>
<path d="M8.4 871.8 L17 863" stroke="#6a6a6a" stroke-width="1.8" stroke-linecap="round"/>
<path d="M9 863.4 L17.4 871.6" stroke="#6a6a6a" stroke-width="1.6" stroke-linecap="round"/>
<circle cx="9" cy="863.8" r="1.7" fill="none" stroke="#6a6a6a" stroke-width="1.1"/>
<!-- Logout -->
<circle cx="11.8" cy="908.6" r="2.7" fill="#f4f4f4" stroke="#a8a8a8" stroke-width="0.7"/>
<path d="M6.4 918.2 C6.4 914.2 8.6 912.2 11.8 912.2 C15 912.2 17 914.2 17 918.2 C14 919.6 9.4 919.6 6.4 918.2 Z" fill="#ececec" stroke="#a8a8a8" stroke-width="0.7"/>
<path d="M9.4 913.8 L15.2 913.8 L15.2 911.2 L20.8 915.9 L15.2 920.6 L15.2 918 L9.4 918 Z" fill="url(#arr)" stroke="#c87408" stroke-width="0.6"/>
<!-- Document Viewer -->
<rect x="185" y="745" width="14" height="13.8" rx="1.4" fill="url(#evg)" stroke="#9c1828" stroke-width="0.8"/>
<path d="M192.8 746.6 L186.4 751.6 L192.8 757.2" fill="none" stroke="#fff" stroke-width="0.9" opacity="0.95"/>
<path d="M194.6 746.4 L197 746.4 L196.6 752 L197.8 757.6 L193.6 757.6 L195 752 Z" fill="#f6f0f0"/>
<path d="M186.4 751.6 L192.8 746.6 L192.8 757.2 Z" fill="#d83a3a" opacity="0.5"/>
<!-- mtPaint pencils -->
<g stroke-width="0.5">
<path d="M184.9 772.6 L186.9 767 L188.9 772.6 L188.9 781.2 Q186.9 782.6 184.9 781.2 Z" fill="#e81010" stroke="#8c0808"/>
<path d="M190 772.6 L192 767 L194 772.6 L194 781.2 Q192 782.6 190 781.2 Z" fill="#e8dc10" stroke="#8c8408"/>
<path d="M195.1 772.6 L197.1 767 L199.1 772.6 L199.1 781.2 Q197.1 782.6 195.1 781.2 Z" fill="#6c8cf0" stroke="#34489c"/>
</g>
<g fill="#7cb48c"><path d="M185.3 772.4 L186.3 769.4 L187.5 769.4 L188.5 772.4 Z"/><path d="M190.4 772.4 L191.4 769.4 L192.6 769.4 L193.6 772.4 Z"/><path d="M195.5 772.4 L196.5 769.4 L197.7 769.4 L198.7 772.4 Z"/></g>
<!-- Simple Scan -->
<rect x="184.4" y="790.4" width="15.2" height="15" rx="1.6" fill="url(#scn)" stroke="#2c2c2c" stroke-width="1"/>
<rect x="187" y="793.2" width="9.8" height="8.4" rx="0.8" fill="#1c1c1c"/>
<rect x="187.8" y="797.4" width="8.2" height="1.9" fill="#f0e8a0"/>
<rect x="187.8" y="798" width="8.2" height="0.8" fill="#fffef0"/>
<path d="M188 796.4 L195.8 795.2" stroke="#777" stroke-width="0.7"/>
</svg>

<!--MENU_END-->
<!--PANEL_START-->
<div id="panel"></div>
<div class="abs" style="left:0;top:928px;width:46px;height:23px;background:linear-gradient(#80b0d9 0%,#6598c8 30%,#437bb0 60%,#1f5c92 100%)"></div>
<div class="abs" style="left:139px;top:930px;width:37px;height:20px;background:#527aa4"></div>
<div class="abs" style="left:151px;top:934px;width:17px;height:12px;background:#8fb2d6;border:1px solid #fff"></div>
<div class="abs" style="left:177px;top:930px;width:37px;height:20px;background:#a1a1a1"></div>
<div class="abs" style="left:222px;top:929px;width:146px;height:22px;background:linear-gradient(#c6c6c6 0%,#b0b0b0 25%,#a2a2a2 55%,#9c9c9c 100%);box-shadow:inset 2px 0 2px -1px rgba(0,0,0,.35),inset -2px 0 2px -1px rgba(0,0,0,.35)"></div>
<div class="t" style="left:245.80px;top:931.00px;font-size:14.50px;color:#faf6ea;letter-spacing:-0.251px;">andrei</div>
<div class="t" style="left:1466.40px;top:931.00px;font-size:11.90px;color:#151515;letter-spacing:0.884px;">12:50</div>
<svg class="abs" style="left:0;top:926px" width="1528" height="25" viewBox="0 926 1528 25">
<defs>
<linearGradient id="pfFront" x1="0" y1="0" x2="0.4" y2="1"><stop offset="0" stop-color="#9ab6d6"/><stop offset="0.5" stop-color="#6f94c0"/><stop offset="1" stop-color="#527cae"/></linearGradient>
<linearGradient id="pfBack" x1="0" y1="0" x2="0" y2="1"><stop offset="0" stop-color="#ffffff"/><stop offset="1" stop-color="#d8d8d8"/></linearGradient>
<linearGradient id="brw" x1="0" y1="0" x2="0" y2="1"><stop offset="0" stop-color="#3a7cc0"/><stop offset="1" stop-color="#2a66a8"/></linearGradient>
<radialGradient id="brc" cx="0.4" cy="0.35" r="0.7"><stop offset="0" stop-color="#7cc8f8"/><stop offset="0.5" stop-color="#2a7ad0"/><stop offset="1" stop-color="#0c4a94"/></radialGradient>
<linearGradient id="win1" x1="0" y1="0" x2="0" y2="1"><stop offset="0" stop-color="#f0f0ec"/><stop offset="1" stop-color="#d4d4cc"/></linearGradient>
</defs>
<!-- start logo -->
<rect x="0" y="928" width="46" height="1" fill="#a8cdea" opacity="0.8"/>
<circle cx="20.9" cy="939.9" r="9.2" fill="#ffffff" stroke="#3a5f88" stroke-width="0.5"/>
<path d="M22.8 934.1 C19.5 935.5 15.5 937.8 12.3 939.9 L14.4 940.4 L12.9 942.4 L15 941.6 L13.7 944.2 L15.9 942.6 L15.1 945.9 C17 942.8 19 939.8 20.9 938.1 C23 939.4 25.2 943 26.9 947.2 C26.2 942.6 24.8 938 22.8 934.1 Z" fill="#4884ba"/>
<path d="M15.1 945.9 C17 942.8 19 939.8 20.9 938.1 C23 939.4 25.2 943 26.9 947.2" fill="none" stroke="#27384a" stroke-width="0.55" opacity="0.85"/>
<!-- file manager -->
<path d="M54.8 951 L54.8 933.8 Q54.8 932.9 55.7 932.9 L57.2 932.9 L57.2 931.6 Q57.2 930.7 58.1 930.7 L63.6 930.7 Q64.5 930.7 64.5 931.6 L64.5 932.9 L74 932.9 Q74.9 932.9 74.9 933.8 L74.9 951 Z" fill="url(#pfBack)" stroke="#9a9a9a" stroke-width="0.8"/>
<path d="M57.4 951 L57.4 935 Q57.4 934.2 58.2 934.2 L76.8 934.2 Q77.6 934.2 77.6 935 L77.6 951 Z" fill="url(#pfFront)" stroke="#4a6a94" stroke-width="0.8"/>
<path d="M58.5 951 L58.5 935.3 L76.6 935.3" fill="none" stroke="#c4d6ea" stroke-width="0.7" opacity="0.8"/>
<path d="M67.6 937.4 L67.6 949.6 L70.4 947 L72.2 951 L74.2 951 L72.4 946.4 L76.2 946.2 Z" fill="#e4e4e4" stroke="#6a6a6a" stroke-width="0.8"/>
<!-- browser -->
<defs><clipPath id="brclip"><rect x="83.1" y="930.1" width="20" height="21" rx="1.6"/></clipPath>
<linearGradient id="brTop" x1="0" y1="0" x2="0" y2="1"><stop offset="0" stop-color="#5a98d8"/><stop offset="0.25" stop-color="#3c78b8"/><stop offset="1" stop-color="#2a5a90"/></linearGradient>
<linearGradient id="brR" x1="0" y1="0" x2="0" y2="1"><stop offset="0" stop-color="#c6e2f8"/><stop offset="1" stop-color="#84b0da"/></linearGradient>
<linearGradient id="brL" x1="0" y1="0" x2="0" y2="1"><stop offset="0" stop-color="#86bcea"/><stop offset="1" stop-color="#4890d8"/></linearGradient>
<radialGradient id="brS" cx="0.5" cy="0.7" r="0.6"><stop offset="0" stop-color="#56d0f6"/><stop offset="0.5" stop-color="#2080d0"/><stop offset="1" stop-color="#164c9c"/></radialGradient>
<radialGradient id="brG" cx="0.3" cy="0.22" r="0.5"><stop offset="0" stop-color="#fff" stop-opacity="0.85"/><stop offset="1" stop-color="#fff" stop-opacity="0"/></radialGradient>
</defs>
<g clip-path="url(#brclip)">
<rect x="82" y="929" width="23" height="23" fill="url(#brTop)"/>
<path d="M83 937.2 L89.4 942.8 L93.6 944.8 L89.2 951 L83 951 Z" fill="url(#brL)"/>
<path d="M96.4 935.5 L104 935.5 L104 951 L89.6 951 L94 944.8 Z" fill="url(#brR)"/>
<path d="M83 937.2 L89.4 942.8 M94 944.8 L89.4 951 M96.6 935.5 L104 935.5" stroke="#123f74" stroke-width="0.9" fill="none"/>
</g>
<rect x="82.7" y="929.7" width="20.8" height="22" rx="2" fill="none" stroke="#123f74" stroke-width="1.2"/>
<circle cx="93.1" cy="939.9" r="4.5" fill="url(#brS)" stroke="#123f74" stroke-width="0.9"/>
<circle cx="93.1" cy="939.9" r="4" fill="url(#brG)"/>
<!-- show desktop -->
<rect x="116.9" y="935.8" width="13.6" height="12.6" rx="0.8" fill="#fff" stroke="#8a8a82" stroke-width="0.9"/>
<rect x="118.1" y="937.4" width="11.2" height="9.8" fill="#e0e0da"/>
<path d="M116.5 938.4 L116.5 936.4 Q116.5 935.3 117.6 935.3 L129.8 935.3 Q130.9 935.3 130.9 936.4 L130.9 938.4 Z" fill="#2d5cab"/>
<rect x="111.8" y="931.6" width="13.6" height="12.8" rx="0.8" fill="#fff" stroke="#8a8a82" stroke-width="0.9"/>
<rect x="113" y="934" width="11.2" height="9.2" fill="#e2e2dc"/>
<path d="M111.4 934 L111.4 932.2 Q111.4 931.1 112.5 931.1 L124.7 931.1 Q125.8 931.1 125.8 932.2 L125.8 934 Z" fill="#2d5cab"/>
<rect x="112.6" y="932.5" width="12" height="0.8" fill="#6a94d4" opacity="0.7"/>
<!-- task folder -->
<path d="M226.2 948.6 L226.2 934.6 Q226.2 933.8 227 933.8 L228.6 933.8 L228.6 933.4 Q228.6 932.8 229.4 932.8 L234 932.8 Q234.8 932.8 234.8 933.6 L234.8 934.2 L241 934.2 Q241.8 934.2 241.8 935 L241.8 948.6 Z" fill="url(#pfBack)" stroke="#a4a4a4" stroke-width="0.6"/>
<rect x="227.4" y="935.2" width="16.8" height="14" rx="1" fill="url(#pfFront)" stroke="#5a7aa4" stroke-width="0.6"/>
<!-- volume -->
<path d="M1373.8 938.2 L1377 938.2 L1381 934 L1381 948 L1377 943.8 L1373.8 943.8 Z" fill="#5a5a5a"/>
<path d="M1383.6 937.6 C1385.2 939.4 1385.2 942.6 1383.6 944.4" fill="none" stroke="#5a5a5a" stroke-width="1.5"/>
<path d="M1386.4 935.6 C1389 938.4 1389 943.6 1386.4 946.4" fill="none" stroke="#5a5a5a" stroke-width="1.5"/>
<path d="M1389.6 933.4 C1393.4 937.4 1393.4 944.6 1389.6 948.6" fill="none" stroke="#a6a6a6" stroke-width="1.3"/>
<!-- battery -->
<rect x="1405.7" y="930.2" width="4.2" height="2.6" rx="0.8" fill="none" stroke="#666" stroke-width="0.9"/>
<rect x="1403.4" y="932.2" width="8.9" height="16.2" rx="1.4" fill="#dfdfdf" stroke="#666" stroke-width="1"/>
<rect x="1405" y="942" width="5.8" height="5" fill="#555"/>
<!-- network -->
<path d="M1437.1 932.2 L1442 937.6 L1439 937.6 L1439 943.6 L1435.2 943.6 L1435.2 937.6 L1432.2 937.6 Z" fill="#555"/>
<path d="M1445.5 948.9 L1450.4 943.4 L1447.4 943.4 L1447.4 936.6 L1443.6 936.6 L1443.6 943.4 L1440.6 943.4 Z" fill="#555"/>
<!-- power -->
<path d="M1513.2 934.6 C1509.4 936.8 1508.6 942 1511.6 945.2 C1514.6 948.2 1519.6 948.2 1522.6 945.2 C1525.6 942 1524.8 936.8 1521 934.6" fill="none" stroke="#555" stroke-width="1.5" stroke-linecap="round"/>
<path d="M1517.1 931.6 L1517.1 940.4" stroke="#555" stroke-width="1.6" stroke-linecap="round"/>
</svg>

<!--PANEL_END-->
</body>
</html>
